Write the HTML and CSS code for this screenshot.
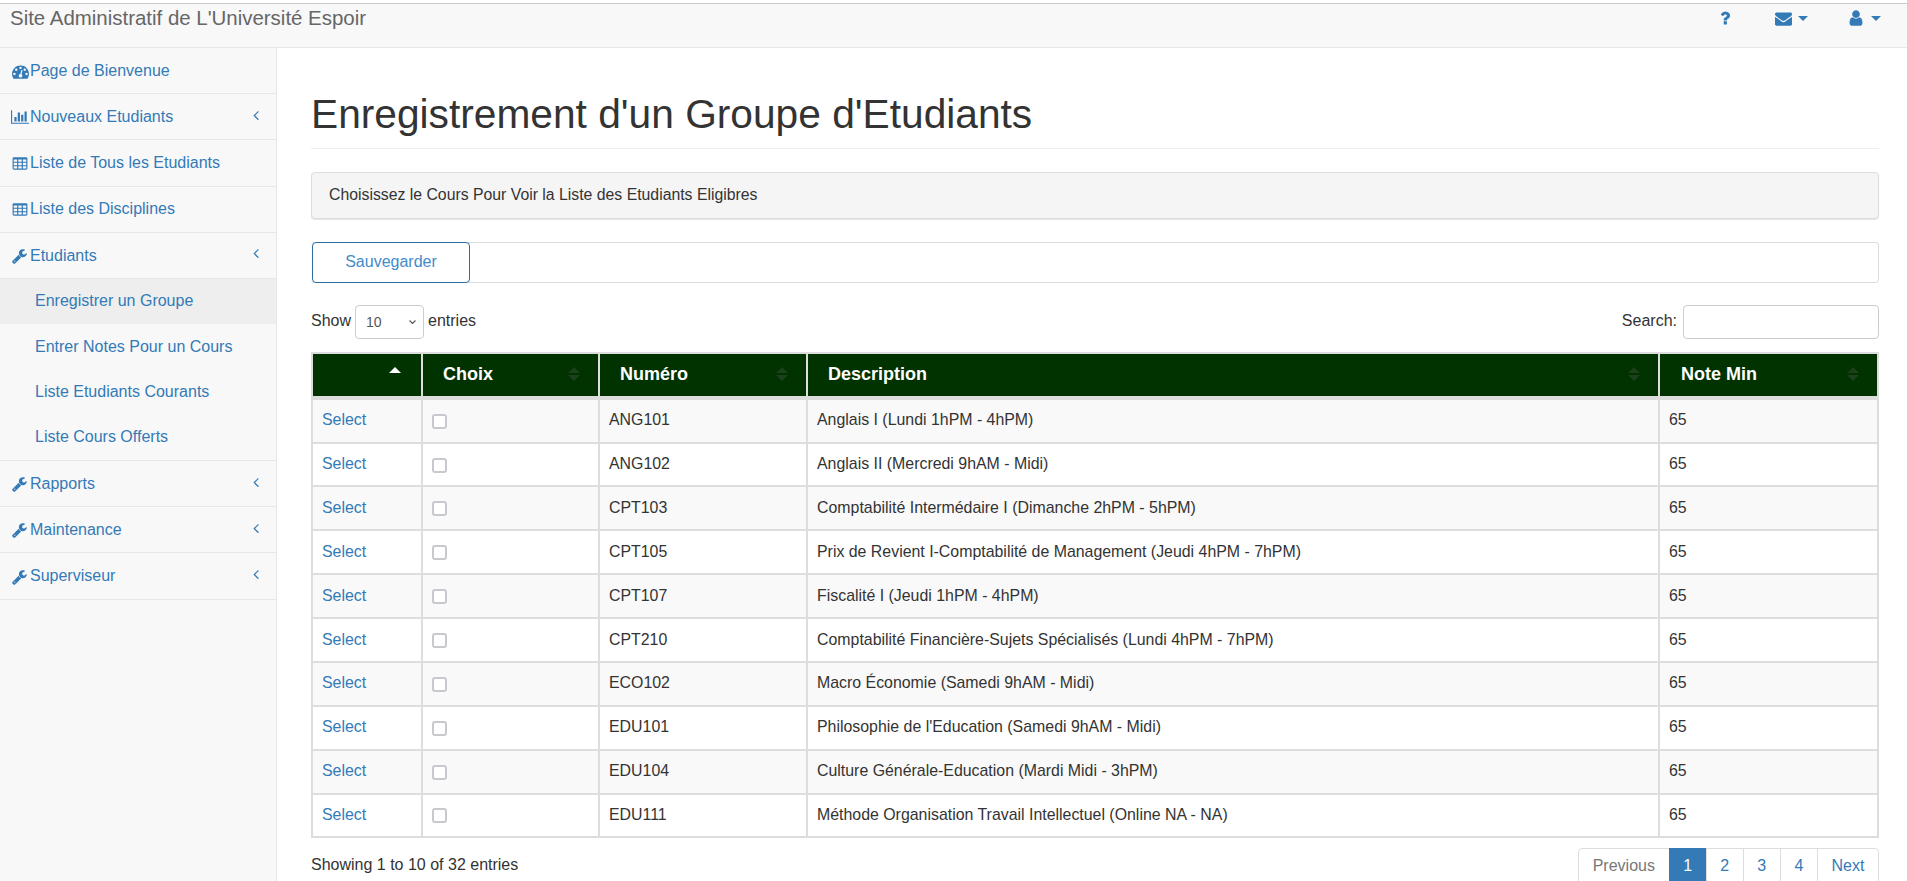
FILE: index.html
```html
<!doctype html>
<html>
<head>
	<meta charset="utf-8" />
	<title>Site Administratif de L'Université Espoir</title>
	<link rel="stylesheet" href="styles.css">
</head>
<body>
	<svg class="icon-defs" xmlns="http://www.w3.org/2000/svg">
		<symbol id="i-dashboard" viewBox="0 0 1792 1792"><path d="M384 1152q0-53-37.5-90.5t-90.5-37.5-90.5 37.5-37.5 90.5 37.5 90.5 90.5 37.5 90.5-37.5 37.5-90.5zm192-448q0-53-37.5-90.5t-90.5-37.5-90.5 37.5-37.5 90.5 37.5 90.5 90.5 37.5 90.5-37.5 37.5-90.5zm428 481l101-382q6-26-7.5-48.5t-38.5-29.5-48 6.5-30 39.5l-101 382q-60 5-107 43.5t-63 98.5q-20 77 20 146t117 89 146-20 89-117q16-60-6-117t-72-91zm660-33q0-53-37.5-90.5t-90.5-37.5-90.5 37.5-37.5 90.5 37.5 90.5 90.5 37.5 90.5-37.5 37.5-90.5zm-640-640q0-53-37.5-90.5t-90.5-37.5-90.5 37.5-37.5 90.5 37.5 90.5 90.5 37.5 90.5-37.5 37.5-90.5zm448 192q0-53-37.5-90.5t-90.5-37.5-90.5 37.5-37.5 90.5 37.5 90.5 90.5 37.5 90.5-37.5 37.5-90.5zm320 448q0 261-141 483-19 29-54 29h-1402q-35 0-54-29-141-221-141-483 0-182 71-348t191-286 286-191 348-71 348 71 286 191 191 286 71 348z"/></symbol>
		<symbol id="i-chart" viewBox="0 0 2048 1792"><path d="M640 896v512h-256v-512h256zm384-512v1024h-256v-1024h256zm1024 1152v128h-2048v-1536h128v1408h1920zm-640-896v768h-256v-768h256zm384-384v1152h-256v-1152h256z"/></symbol>
		<symbol id="i-table" viewBox="0 0 1792 1792"><path d="M576 1376v-192q0-14-9-23t-23-9h-320q-14 0-23 9t-9 23v192q0 14 9 23t23 9h320q14 0 23-9t9-23zm0-384v-192q0-14-9-23t-23-9h-320q-14 0-23 9t-9 23v192q0 14 9 23t23 9h320q14 0 23-9t9-23zm512 384v-192q0-14-9-23t-23-9h-320q-14 0-23 9t-9 23v192q0 14 9 23t23 9h320q14 0 23-9t9-23zm-512-768v-192q0-14-9-23t-23-9h-320q-14 0-23 9t-9 23v192q0 14 9 23t23 9h320q14 0 23-9t9-23zm512 384v-192q0-14-9-23t-23-9h-320q-14 0-23 9t-9 23v192q0 14 9 23t23 9h320q14 0 23-9t9-23zm512 384v-192q0-14-9-23t-23-9h-320q-14 0-23 9t-9 23v192q0 14 9 23t23 9h320q14 0 23-9t9-23zm-512-768v-192q0-14-9-23t-23-9h-320q-14 0-23 9t-9 23v192q0 14 9 23t23 9h320q14 0 23-9t9-23zm512 384v-192q0-14-9-23t-23-9h-320q-14 0-23 9t-9 23v192q0 14 9 23t23 9h320q14 0 23-9t9-23zm0-384v-192q0-14-9-23t-23-9h-320q-14 0-23 9t-9 23v192q0 14 9 23t23 9h320q14 0 23-9t9-23zm128-320v1088q0 66-47 113t-113 47h-1344q-66 0-113-47t-47-113v-1088q0-66 47-113t113-47h1344q66 0 113 47t47 113z"/></symbol>
		<symbol id="i-wrench" viewBox="0 0 1792 1792"><path d="M384 1472q0-26-19-45t-45-19-45 19-19 45 19 45 45 19 45-19 19-45zm644-420l-682 682q-37 37-90 37-52 0-91-37l-106-108q-38-36-38-90 0-53 38-91l681-681q39 98 114.5 173.5t173.5 114.5zm634-435q0 39-23 106-47 134-164.5 217.5t-258.5 83.5q-185 0-316.5-131.5t-131.5-316.5 131.5-316.5 316.5-131.5q58 0 121.5 16.5t107.5 46.5q16 11 16 28t-16 28l-293 169v224l193 107q5-3 79-48.5t135.5-81 70.5-35.5q15 0 23.5 10t8.5 25z"/></symbol>
		<symbol id="i-angle" viewBox="0 0 1792 1792"><path d="M1203 544q0 13-10 23l-393 393 393 393q10 10 10 23t-10 23l-50 50q-10 10-23 10t-23-10l-466-466q-10-10-10-23t10-23l466-466q10-10 23-10t23 10l50 50q10 10 10 23z"/></symbol>
		<symbol id="i-question" viewBox="0 0 1792 1792"><path d="M1088 1256v240q0 16-12 28t-28 12h-240q-16 0-28-12t-12-28v-240q0-16 12-28t28-12h240q16 0 28 12t12 28zm316-600q0 54-15.5 101t-35 76.5-55 59.5-57.5 43.5-61 35.5q-41 23-68.5 65t-27.5 67q0 17-12 32.5t-28 15.5h-240q-15 0-25.5-18.5t-10.5-37.5v-45q0-83 65-156.5t143-108.5q59-27 84-56t25-76q0-42-46.5-74t-107.5-32q-65 0-108 29-35 25-107 115-13 16-31 16-12 0-25-8l-164-125q-13-10-15.5-25t5.5-28q160-266 464-266 80 0 161 31t146 83 106 127.5 41 158.5z"/></symbol>
		<symbol id="i-envelope" viewBox="0 0 1792 1792"><path d="M1792 710v794q0 66-47 113t-113 47h-1472q-66 0-113-47t-47-113v-794q44 49 101 87 362 246 497 345 57 42 92.5 65.5t94.5 48 110 24.5h2q51 0 110-24.5t94.5-48 92.5-65.5q170-123 498-345 57-39 100-87zm0-294q0 79-49 151t-122 123q-376 261-468 325-10 7-42.5 30.5t-54 38-52 32.5-57.5 27-50 9h-2q-23 0-50-9t-57.5-27-52-32.5-54-38-42.5-30.5q-91-64-262-182.5t-205-142.5q-62-42-117-115.5t-55-136.5q0-78 41.5-130t118.5-52h1472q65 0 112.5 47t47.5 113z"/></symbol>
		<symbol id="i-user" viewBox="0 0 1792 1792"><path d="M1536 1399q0 109-62.5 187t-150.5 78h-854q-88 0-150.5-78t-62.5-187q0-85 8.5-160.5t31.5-152 58.5-131 94-89 134.5-34.5q131 128 313 128t313-128q76 0 134.5 34.5t94 89 58.5 131 31.5 152 8.5 160.5zm-256-887q0 159-112.5 271.5t-271.5 112.5-271.5-112.5-112.5-271.5 112.5-271.5 271.5-112.5 271.5 112.5 112.5 271.5z"/></symbol>
	</svg>

	<nav class="topbar">
		<a class="brand" href="#">Site Administratif de L'Université Espoir</a>
		<div class="top-links">
			<a class="top-link help" href="#"><svg class="ico"><use href="#i-question"/></svg></a>
			<a class="top-link mail" href="#"><svg class="ico"><use href="#i-envelope"/></svg><span class="caret"></span></a>
			<a class="top-link account" href="#"><svg class="ico"><use href="#i-user"/></svg><span class="caret"></span></a>
		</div>
	</nav>

	<div class="layout">
		<aside class="sidebar">
			<a class="side-item" href="#"><svg class="ico dash"><use href="#i-dashboard"/></svg>Page de Bienvenue</a>
			<a class="side-item" href="#"><svg class="ico chart"><use href="#i-chart"/></svg>Nouveaux Etudiants<svg class="angle"><use href="#i-angle"/></svg></a>
			<a class="side-item" href="#"><svg class="ico"><use href="#i-table"/></svg>Liste de Tous les Etudiants</a>
			<a class="side-item" href="#"><svg class="ico"><use href="#i-table"/></svg>Liste des Disciplines</a>
			<a class="side-item" href="#"><svg class="ico"><use href="#i-wrench"/></svg>Etudiants<svg class="angle"><use href="#i-angle"/></svg></a>
			<div class="side-sub">
				<a class="sub-item active" href="#">Enregistrer un Groupe</a>
				<a class="sub-item" href="#">Entrer Notes Pour un Cours</a>
				<a class="sub-item" href="#">Liste Etudiants Courants</a>
				<a class="sub-item" href="#">Liste Cours Offerts</a>
			</div>
			<a class="side-item" href="#"><svg class="ico"><use href="#i-wrench"/></svg>Rapports<svg class="angle"><use href="#i-angle"/></svg></a>
			<a class="side-item" href="#"><svg class="ico"><use href="#i-wrench"/></svg>Maintenance<svg class="angle"><use href="#i-angle"/></svg></a>
			<a class="side-item" href="#"><svg class="ico"><use href="#i-wrench"/></svg>Superviseur<svg class="angle"><use href="#i-angle"/></svg></a>
		</aside>

		<main class="content">
			<h1 class="page-title">Enregistrement d'un Groupe d'Etudiants</h1>

			<div class="panel">Choisissez le Cours Pour Voir la Liste des Etudiants Eligibres</div>

			<div class="toolbar">
				<a class="save-btn" href="#">Sauvegarder</a>
			</div>

			<div class="table-top">
				<label class="length">Show
					<select class="length-select"><option>10</option><option>25</option><option>50</option></select>
					entries</label>
				<label class="search">Search:
					<input class="search-input" type="search" />
				</label>
			</div>

			<table class="grid">
				<colgroup>
					<col class="col-select" />
					<col class="col-choice" />
					<col class="col-number" />
					<col class="col-desc" />
					<col class="col-note" />
				</colgroup>
				<thead>
					<tr>
						<th class="sort-asc"></th>
						<th class="sortable">Choix</th>
						<th class="sortable">Numéro</th>
						<th class="sortable">Description</th>
						<th class="sortable">Note Min</th>
					</tr>
				</thead>
				<tbody>
					<tr><td><a href="#">Select</a></td><td><input class="pick" type="checkbox" /></td><td>ANG101</td><td>Anglais I (Lundi 1hPM - 4hPM)</td><td>65</td></tr>
					<tr><td><a href="#">Select</a></td><td><input class="pick" type="checkbox" /></td><td>ANG102</td><td>Anglais II (Mercredi 9hAM - Midi)</td><td>65</td></tr>
					<tr><td><a href="#">Select</a></td><td><input class="pick" type="checkbox" /></td><td>CPT103</td><td>Comptabilité Intermédaire I (Dimanche 2hPM - 5hPM)</td><td>65</td></tr>
					<tr><td><a href="#">Select</a></td><td><input class="pick" type="checkbox" /></td><td>CPT105</td><td>Prix de Revient I-Comptabilité de Management (Jeudi 4hPM - 7hPM)</td><td>65</td></tr>
					<tr><td><a href="#">Select</a></td><td><input class="pick" type="checkbox" /></td><td>CPT107</td><td>Fiscalité I (Jeudi 1hPM - 4hPM)</td><td>65</td></tr>
					<tr><td><a href="#">Select</a></td><td><input class="pick" type="checkbox" /></td><td>CPT210</td><td>Comptabilité Financière-Sujets Spécialisés (Lundi 4hPM - 7hPM)</td><td>65</td></tr>
					<tr><td><a href="#">Select</a></td><td><input class="pick" type="checkbox" /></td><td>ECO102</td><td>Macro Économie (Samedi 9hAM - Midi)</td><td>65</td></tr>
					<tr><td><a href="#">Select</a></td><td><input class="pick" type="checkbox" /></td><td>EDU101</td><td>Philosophie de l'Education (Samedi 9hAM - Midi)</td><td>65</td></tr>
					<tr><td><a href="#">Select</a></td><td><input class="pick" type="checkbox" /></td><td>EDU104</td><td>Culture Générale-Education (Mardi Midi - 3hPM)</td><td>65</td></tr>
					<tr><td><a href="#">Select</a></td><td><input class="pick" type="checkbox" /></td><td>EDU111</td><td>Méthode Organisation Travail Intellectuel (Online NA - NA)</td><td>65</td></tr>
				</tbody>
			</table>

			<div class="table-bottom">
				<div class="info">Showing 1 to 10 of 32 entries</div>
				<ul class="pager">
					<li class="disabled"><a href="#">Previous</a></li>
					<li class="current"><a href="#">1</a></li>
					<li><a href="#">2</a></li>
					<li><a href="#">3</a></li>
					<li><a href="#">4</a></li>
					<li><a href="#">Next</a></li>
				</ul>
			</div>
		</main>
	</div>
</body>
</html>
```

FILE: styles.css
```css
* { box-sizing: border-box; }

html, body {
	height: 100%;
	margin: 0;
	overflow: hidden;
}

body {
	display: flex;
	flex-direction: column;
	padding-top: 3px;
	background: #fff;
	color: #333;
	font-family: "Liberation Sans", Arial, sans-serif;
	font-size: 16px;
	line-height: 1.42857;
}

a {
	color: #337ab7;
	text-decoration: none;
}

.icon-defs {
	position: absolute;
	width: 0;
	height: 0;
}

.ico, .angle {
	fill: currentColor;
	flex: none;
}

/* top bar */
.topbar {
	display: flex;
	justify-content: space-between;
	flex: none;
	height: 45px;
	background: #f8f8f8;
	border-top: 1px solid #c8c8cc;
	border-bottom: 1px solid #e7e7e7;
}

.brand {
	padding-left: 10px;
	color: #666;
	font-size: 20.45px;
	line-height: 28px;
}

.top-links {
	display: flex;
	align-items: flex-start;
	padding-top: 5px;
}

.top-link {
	display: flex;
	align-items: center;
	height: 18px;
}

.top-link .ico {
	width: 18px;
	height: 18px;
}

.help { margin-right: 41px; }
.mail { margin-right: 39px; }
.account { margin-right: 26px; }

.top-link.mail .ico { width: 17px; height: 17px; }

.caret {
	margin-left: 6px;
	border-top: 5px solid #337ab7;
	border-left: 5px solid transparent;
	border-right: 5px solid transparent;
}

/* sidebar */
.layout {
	display: flex;
	flex: 1;
	min-height: 0;
}

.sidebar {
	flex: none;
	width: 277px;
	background: #f8f8f8;
	border-right: 1px solid #e7e7e7;
}

.side-item {
	display: flex;
	align-items: center;
	padding: 11.7px 12px 10.7px;
	border-bottom: 1px solid #e7e7e7;
}

.side-item .ico {
	width: 16px;
	height: 16px;
	margin-right: 2px;
}

.side-item .ico.dash {
	width: 17px;
	height: 17px;
	margin-right: 1px;
}

.side-item .ico.chart {
	width: 18px;
	margin-left: -1px;
	margin-right: 1px;
}

.angle {
	width: 16px;
	height: 16px;
	margin-left: auto;
	margin-top: -5px;
}

.side-sub {
	border-bottom: 1px solid #e7e7e7;
}

.sub-item {
	display: block;
	padding: 11.2px 12px 11.2px 35px;
}

.sub-item.active {
	background: #eee;
}

/* main area */
.content {
	flex: 1;
	min-width: 0;
	padding: 0 28px 0 34px;
}

.page-title {
	margin: 44px 0 23px;
	padding-bottom: 11px;
	border-bottom: 1px solid #eee;
	font-size: 40.7px;
	font-weight: 500;
	line-height: 1.1;
}

.panel {
	height: 47px;
	padding: 11.5px 17px 0;
	background: #f5f5f5;
	border: 1px solid #ddd;
	border-radius: 4px;
	box-shadow: 0 1px 1px rgba(0, 0, 0, 0.1);
	font-size: 15.8px;
}

.toolbar {
	height: 41px;
	margin-top: 23px;
	border: 1px solid #ddd;
	border-left: 0;
	border-radius: 4px;
}

.save-btn {
	display: block;
	width: 158px;
	height: 41px;
	margin: -1px 0 0 1px;
	padding-top: 8px;
	background: #fff;
	border: 1px solid #2e6da4;
	border-radius: 4px;
	color: #428bca;
	text-align: center;
}

.table-top {
	display: flex;
	justify-content: space-between;
	align-items: center;
	height: 34px;
	margin: 22px 0 13px;
}

.length, .search {
	display: flex;
	align-items: center;
}

.length-select {
	width: 69px;
	height: 34px;
	margin: 0 4px;
	padding: 0 0 0 10px;
	appearance: none;
	background: #fff url("data:image/svg+xml,%3Csvg xmlns='http://www.w3.org/2000/svg' width='7' height='4'%3E%3Cpath d='M.5.5l3 3 3-3' fill='none' stroke='%23555' stroke-width='1.1'/%3E%3C/svg%3E") no-repeat right 7px center;
	border: 1px solid #ccc;
	border-radius: 4px;
	color: #555;
	font-family: inherit;
	font-size: 14px;
}

.search-input {
	width: 196px;
	height: 34px;
	margin-left: 6px;
	background: #fff;
	border: 1px solid #ccc;
	border-radius: 4px;
}

/* table */
.grid {
	width: 100%;
	table-layout: fixed;
	border-collapse: separate;
	border-spacing: 0;
	border: 1px solid #ddd;
}

.col-select { width: 110px; }
.col-choice { width: 177px; }
.col-number { width: 208px; }
.col-desc { width: 852px; }

.grid th {
	position: relative;
	height: 46px;
	padding: 8px 20px;
	background: #003300;
	border: 1px solid #ddd;
	border-bottom-width: 3px;
	color: #fff;
	font-size: 18px;
	text-align: left;
}

.grid th:last-child {
	padding-left: 21px;
}

.grid td {
	padding: 9.5px 9px;
	border: 1px solid #ddd;
	font-size: 15.9px;
	line-height: 22.857px;
}

.grid tbody tr:nth-child(odd) {
	background: #f9f9f9;
}

.pick {
	display: block;
	width: 15px;
	height: 15px;
	margin: 1px 0 0;
	appearance: none;
	background: #fff;
	border: 2px solid #c8c8ce;
	border-radius: 3px;
}

/* sort arrows */
.sortable::before, .sortable::after, .sort-asc::before {
	content: "";
	position: absolute;
	right: 18px;
	border-left: 6px solid transparent;
	border-right: 6px solid transparent;
}

.sortable::before {
	top: 13px;
	border-bottom: 6px solid #1c3f1c;
}

.sortable::after {
	top: 21px;
	border-top: 6px solid #1c3f1c;
}

.sort-asc::before {
	top: 13px;
	right: 20px;
	border-bottom: 6px solid #fff;
}

/* below the table */
.table-bottom {
	display: flex;
	justify-content: space-between;
	align-items: flex-start;
	margin-top: 10px;
}

.info {
	padding-top: 6px;
}

.pager {
	display: flex;
	margin: 0;
	padding: 0;
	list-style: none;
}

.pager a {
	display: block;
	margin-left: -1px;
	padding: 6px 13.6px;
	background: #fff;
	border: 1px solid #ddd;
}

.pager li:first-child a {
	margin-left: 0;
	border-radius: 4px 0 0 4px;
}

.pager li:last-child a {
	border-radius: 0 4px 4px 0;
}

.pager .disabled a {
	color: #777;
}

.pager .current a {
	background: #337ab7;
	border-color: #337ab7;
	color: #fff;
}
```
